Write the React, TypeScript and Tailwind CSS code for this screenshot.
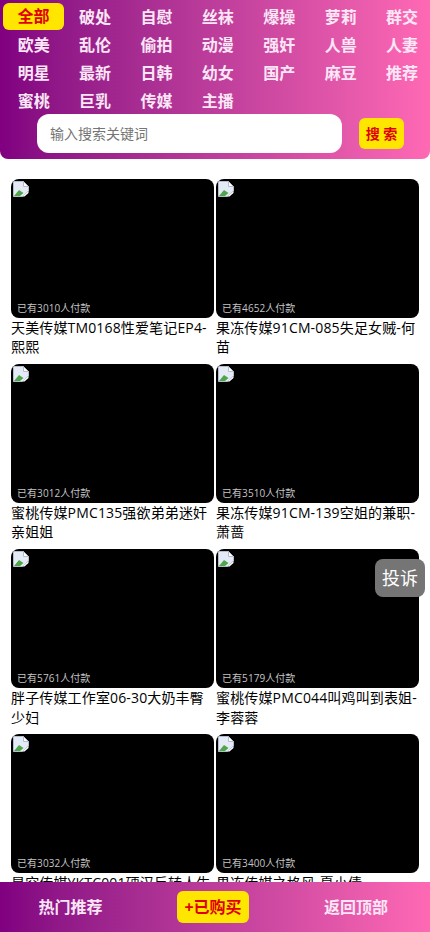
const CATEGORIES = [
  "全部", "破处", "自慰", "丝袜", "爆操", "萝莉", "群交",
  "欧美", "乱伦", "偷拍", "动漫", "强奸", "人兽", "人妻",
  "明星", "最新", "日韩", "幼女", "国产", "麻豆", "推荐",
  "蜜桃", "巨乳", "传媒", "主播",
];

const VIDEOS = [
  { title: "天美传媒TM0168性爱笔记EP4-熙熙", paid: 3010 },
  { title: "果冻传媒91CM-085失足女贼-何苗", paid: 4652 },
  { title: "蜜桃传媒PMC135强欲弟弟迷奸亲姐姐", paid: 3012 },
  { title: "果冻传媒91CM-139空姐的兼职-萧蔷", paid: 3510 },
  { title: "胖子传媒工作室06-30大奶丰臀少妇", paid: 5761 },
  { title: "蜜桃传媒PMC044叫鸡叫到表姐-李蓉蓉", paid: 5179 },
  { title: "星空传媒YKTC001硬汉反转人生", paid: 3032 },
  { title: "果冻传媒之格风-夏小倩", paid: 3400 },
];

// chrome's broken image placeholder
const BrokenImage = () => (
  <svg width="16" height="16" viewBox="0 0 16 16" aria-hidden className="ml-[2px] mt-[2px] block">
    <path d="M0.5 0.5H10.5L15.5 5.5V10L9.5 15.5H0.5Z" fill="#e4ebf6" stroke="#b4bdcb" />
    <path d="M10.5 0.5V5.5H15.5Z" fill="#fff" stroke="#b4bdcb" />
    <path d="M1 15L6 9L10.5 12L7 15Z" fill="#4fa64a" />
    <path d="M9.5 15.5L15.5 10V12L11.5 15.5Z" fill="#fff" />
  </svg>
);

const VideoCard = ({ title, paid }: { title: string; paid: number }) => (
  <div className="h-[185.3px] min-w-0">
    <div className="flex h-[139px] flex-col justify-between overflow-hidden rounded-lg bg-black">
      <BrokenImage />
      <span className="px-[6px] pb-[3px] text-[10px] leading-[14px] tracking-[0.05px] text-[#c4c4c4]">
        已有{paid}人付款
      </span>
    </div>
    <p className="text-[14px] leading-[19.6px] tracking-[0.15px] text-black">{title}</p>
  </div>
);

export default function App() {
  return (
    <div
      className="relative h-[932px] w-[430px] overflow-hidden bg-white"
      style={{ fontFamily: '"Open Sans", "Noto Sans CJK SC", sans-serif' }}
    >
      <header className="h-[159px] rounded-b-lg bg-gradient-to-r from-[#800080] to-[#ff69b4]">
        <div className="grid grid-cols-[repeat(7,61.4px)] pl-[3px] pt-[3px]">
          {CATEGORIES.map((name, i) =>
            i === 0 ? (
              <span
                key={name}
                className="mb-px h-[27px] w-[61px] rounded-md bg-[#ffe600] text-center text-[16px] font-bold leading-[27px] text-[#e00000]"
              >
                {name}
              </span>
            ) : (
              <span key={name} className="h-7 text-center text-[16px] font-bold leading-7 text-[#fbe6f6]">
                {name}
              </span>
            )
          )}
        </div>
        <div className="mt-[-1px] flex items-center pl-[37px]">
          <div className="flex h-[39px] w-[305px] items-center rounded-xl bg-white pl-[13px] text-[14px] text-[#757575]">
            输入搜索关键词
          </div>
          <button className="ml-[17px] h-[31px] w-[45px] rounded-md bg-[#ffe600] text-[14px] font-bold text-[#e00000]">
            搜 索
          </button>
        </div>
      </header>

      <main className="mt-[19.5px] grid grid-cols-[203px_203px] gap-x-[2px] pl-[11px]">
        {VIDEOS.map((v) => (
          <VideoCard key={v.paid} title={v.title} paid={v.paid} />
        ))}
      </main>

      <div className="absolute left-[375px] top-[559px] flex h-[38px] w-[50px] items-center justify-center rounded-lg bg-[#757575] text-[18px] text-white">
        投诉
      </div>

      <footer className="absolute inset-x-0 bottom-0 flex h-[50px] items-center bg-gradient-to-r from-[#800080] to-[#ff69b4]">
        <span className="w-[141px] text-center text-[16px] font-bold text-[#fbe6f6]">热门推荐</span>
        <span className="ml-[36px] flex h-8 w-[72px] items-center justify-center rounded-md bg-[#ffe600] text-[16px] font-bold text-[#e00000]">
          +已购买
        </span>
        <span className="ml-[37px] w-[140px] text-center text-[16px] font-bold text-[#fbe6f6]">返回顶部</span>
      </footer>
    </div>
  );
}
